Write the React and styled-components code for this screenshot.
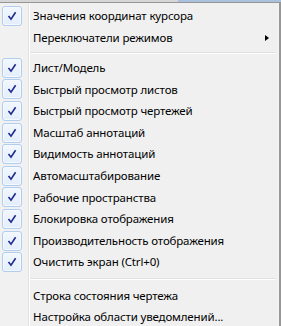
import React from "react";
import styled, { createGlobalStyle } from "styled-components";

const Global = createGlobalStyle`
  html, body { margin: 0; padding: 0; background: #f0f0f0; }
  body { width: 281px; height: 326px; overflow: hidden; }
`;

const Page = styled.div`
  width: 281px;
  height: 326px;
  display: flex;
  flex-direction: column;
  background: #f0f0f0;
  overflow: hidden;
`;

const TopStrip = styled.div`
  height: 2px;
  display: flex;
  flex-shrink: 0;
`;

const StripPart = styled.div`
  flex: ${(p) => p.$flex};
  background: ${(p) => p.$color};
`;

const Menu = styled.div`
  flex: 1;
  display: flex;
  flex-direction: column;
  padding-top: 2px;
  border-top: 1px solid #979797;
  border-right: 2px solid #979797;
  box-shadow: inset -1px 0 0 #f5f5f5;
  background: linear-gradient(
    to right,
    #f1f1f1 0,
    #f1f1f1 28px,
    #e2e3e3 28px,
    #e2e3e3 29px,
    #ffffff 29px,
    #ffffff 30px,
    #f0f0f0 30px
  );
  font-family: "Noto Sans", "Open Sans", sans-serif;
  font-size: 11.5px;
  letter-spacing: -0.15px;
  color: #000;
`;

const Item = styled.div`
  height: ${(p) => p.$h || 21.6}px;
  display: flex;
  align-items: center;
  position: relative;
  flex-shrink: 0;
`;

const Gutter = styled.div`
  width: 33px;
  height: 100%;
  display: flex;
  align-items: center;
  padding-left: 2px;
  box-sizing: border-box;
  flex-shrink: 0;
`;

const CheckBox = styled.div`
  width: 20px;
  height: 20px;
  box-sizing: border-box;
  border: 1px solid #aecdef;
  border-radius: 3px;
  background: linear-gradient(#f2f7fd, #e3eefb);
  box-shadow: inset 0 0 0 1px #f6faff;
  display: flex;
  align-items: center;
  justify-content: center;
`;

const Label = styled.span`
  flex: 1;
  white-space: nowrap;
  line-height: 1;
`;

const Arrow = styled.span`
  width: 0;
  height: 0;
  border-top: 3.5px solid transparent;
  border-bottom: 3.5px solid transparent;
  border-left: 4px solid #000;
  margin-right: 10px;
`;

const Separator = styled.div`
  height: ${(p) => p.$h}px;
  flex-shrink: 0;
  display: flex;
  align-items: center;
  padding-left: 30px;
  padding-right: 4px;
`;

const SepLine = styled.div`
  flex: 1;
  height: 1px;
  background: #e0e0e0;
  border-bottom: 1px solid #ffffff;
`;

const Check = () => (
  <svg width="10" height="10" viewBox="0 0 10 10">
    <path d="M1.5 5 L4 8.2 L8.6 1.2" fill="none" stroke="#1e2a90" strokeWidth="1.6" strokeLinejoin="miter" />
  </svg>
);

const MenuItem = ({ checked, label, submenu, h }) => (
  <Item $h={h}>
    <Gutter>{checked && <CheckBox><Check /></CheckBox>}</Gutter>
    <Label>{label}</Label>
    {submenu && <Arrow />}
  </Item>
);

const group2 = [
  "Лист/Модель",
  "Быстрый просмотр листов",
  "Быстрый просмотр чертежей",
  "Масштаб аннотаций",
  "Видимость аннотаций",
  "Автомасштабирование",
  "Рабочие пространства",
  "Блокировка отображения",
  "Производительность отображения",
  "Очистить экран (Ctrl+0)",
];

export default function App() {
  return (
    <Page>
      <Global />
      <TopStrip>
        <StripPart $flex="178" $color="#d6d6d6" />
        <StripPart $flex="103" $color="#a9c0de" />
      </TopStrip>
      <Menu>
        <MenuItem checked label="Значения координат курсора" h={22} />
        <MenuItem label="Переключатели режимов" submenu h={22} />
        <Separator $h={8}><SepLine /></Separator>
        {group2.map((l) => (
          <MenuItem key={l} checked label={l} />
        ))}
        <Separator $h={12}><SepLine /></Separator>
        <MenuItem label="Строка состояния чертежа" h={21.5} />
        <MenuItem label="Настройка области уведомлений..." h={21.5} />
      </Menu>
    </Page>
  );
}
